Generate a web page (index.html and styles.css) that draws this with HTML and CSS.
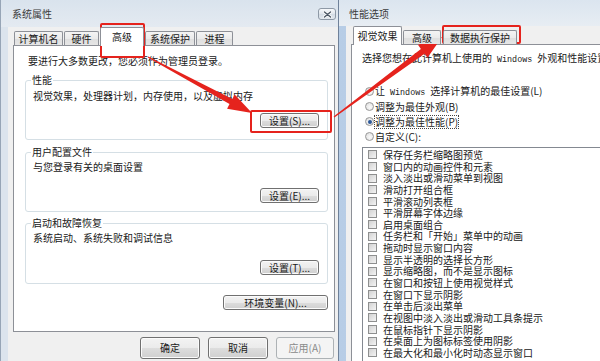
FILE: index.html
```html
<!DOCTYPE html>
<html lang="zh-CN">
<head>
<meta charset="utf-8">
<title>系统属性 / 性能选项</title>
<link rel="stylesheet" href="styles.css">
</head>
<body>
<div class="desk">
  <section class="win win-left">
    <header class="titlebar">
      <span class="title">系统属性</span>
      <span class="close"><svg width="9" height="7" viewBox="0 0 9 7"><path d="M1.5 1 L7.5 6 M7.5 1 L1.5 6" stroke="#fff" stroke-width="3" stroke-linecap="round"/><path d="M1.5 1 L7.5 6 M7.5 1 L1.5 6" stroke="#4d5866" stroke-width="1.5" stroke-linecap="round"/></svg></span>
    </header>
    <div class="client client-left">
      <div class="tabs">
        <span class="tab tw-49">计算机名</span>
        <span class="tab tw-35">硬件</span>
        <span class="tab tab-on tw-44">高级</span>
        <span class="tab tw-50">系统保护</span>
        <span class="tab tw-37">进程</span>
      </div>
      <div class="panel panel-left">
        <p class="intro">要进行大多数更改，您必须作为管理员登录。</p>
        <fieldset class="group g1">
          <legend>性能</legend>
          <p class="gtext">视觉效果，处理器计划，内存使用，以及虚拟内存</p>
          <div class="btn-row"><button class="btn btn-set">设置(S)...</button></div>
        </fieldset>
        <fieldset class="group g2">
          <legend>用户配置文件</legend>
          <p class="gtext">与您登录有关的桌面设置</p>
          <div class="btn-row"><button class="btn btn-set">设置(E)...</button></div>
        </fieldset>
        <fieldset class="group g3">
          <legend>启动和故障恢复</legend>
          <p class="gtext">系统启动、系统失败和调试信息</p>
          <div class="btn-row"><button class="btn btn-set">设置(T)...</button></div>
        </fieldset>
        <div class="btn-row env-row"><button class="btn btn-env">环境变量(N)...</button></div>
      </div>
      <div class="footer">
        <button class="btn btn-dlg">确定</button>
        <button class="btn btn-dlg">取消</button>
        <button class="btn btn-dlg btn-apply" disabled>应用(A)</button>
      </div>
    </div>
  </section>

  <section class="win win-right">
    <header class="titlebar titlebar-right">
      <span class="title">性能选项</span>
    </header>
    <div class="client client-right">
      <div class="tabs tabs-right">
        <span class="tab tab-on tw-49">视觉效果</span>
        <span class="tab tw-38">高级</span>
        <span class="tab tw-74">数据执行保护</span>
      </div>
      <div class="panel panel-right">
        <p class="lead">选择您想在此计算机上使用的<span class="latin"> Windows </span>外观和性能设置。</p>
        <ul class="radios">
          <li><span class="radio"></span><span>让<span class="latin"> Windows </span>选择计算机的最佳设置(L)</span></li>
          <li><span class="radio"></span><span>调整为最佳外观(B)</span></li>
          <li><span class="radio radio-on"></span><span class="focus">调整为最佳性能(P)</span></li>
          <li><span class="radio"></span><span>自定义(C):</span></li>
        </ul>
        <ul class="listbox">
          <li><span class="check"></span>保存任务栏缩略图预览</li>
          <li><span class="check"></span>窗口内的动画控件和元素</li>
          <li><span class="check"></span>淡入淡出或滑动菜单到视图</li>
          <li><span class="check"></span>滑动打开组合框</li>
          <li><span class="check"></span>平滑滚动列表框</li>
          <li><span class="check"></span>平滑屏幕字体边缘</li>
          <li><span class="check"></span>启用桌面组合</li>
          <li><span class="check"></span>任务栏和「开始」菜单中的动画</li>
          <li><span class="check"></span>拖动时显示窗口内容</li>
          <li><span class="check"></span>显示半透明的选择长方形</li>
          <li><span class="check"></span>显示缩略图，而不是显示图标</li>
          <li><span class="check"></span>在窗口和按钮上使用视觉样式</li>
          <li><span class="check"></span>在窗口下显示阴影</li>
          <li><span class="check"></span>在单击后淡出菜单</li>
          <li><span class="check"></span>在视图中淡入淡出或滑动工具条提示</li>
          <li><span class="check"></span>在鼠标指针下显示阴影</li>
          <li><span class="check"></span>在桌面上为图标标签使用阴影</li>
          <li><span class="check"></span>在最大化和最小化时动态显示窗口</li>
        </ul>
      </div>
    </div>
  </section>

  <svg class="marks" width="600" height="361" viewBox="0 0 600 361">
    <g fill="none" stroke="#e5231d" stroke-width="2">
      <rect x="101" y="24" width="43" height="33" rx="1"/>
      <rect x="251" y="111" width="80" height="21" rx="1"/>
      <rect x="443" y="26" width="77" height="17" rx="1"/>
    </g>
    <g fill="#e5231d">
      <polygon points="147.72,57.53 229.50,104.10 227.08,108.66 252,113 234.66,94.58 232.36,99.00 148.28,56.47"/>
      <polygon points="334.36,117.48 424.50,53.70 427.47,57.72 442,37 417.95,44.86 420.90,48.90 333.64,116.52"/>
    </g>
  </svg>
</div>
</body>
</html>
```

FILE: styles.css
```css
* { box-sizing: border-box; }

html, body {
  margin: 0;
  padding: 0;
}

body {
  width: 600px;
  height: 361px;
  overflow: hidden;
  font-family: "Noto Sans CJK SC", "Noto Sans", sans-serif;
  font-size: 10px;
  line-height: 12px;
  color: #202020;
  background: #dfe7ef;
}

p, ul { margin: 0; padding: 0; }
ul { list-style: none; }

.desk {
  position: relative;
  width: 600px;
  height: 361px;
  display: flex;
  overflow: hidden;
}

/* ---------- windows ---------- */
.win {
  display: flex;
  flex-direction: column;
  height: 361px;
  flex: 0 0 auto;
}

.win-left {
  width: 338px;
  border-left: 1px solid #97a5b6;
  background: #dce4ed;
}

.win-right {
  width: 300px;
  border-left: 1px solid #6f8199;
  background: linear-gradient(to right, #b7cde6, #c9daee);
}

.titlebar {
  height: 27px;
  flex: 0 0 auto;
  display: flex;
  justify-content: space-between;
  align-items: flex-start;
  padding-left: 11px;
  background: linear-gradient(#d9e3ed, #e4eaf1);
}

.titlebar-right {
  height: 26px;
  padding-left: 10px;
  background: linear-gradient(#dbe5ef, #e7edf3);
}

.title {
  margin-top: 8px;
  color: #3b3b3b;
}

.close {
  width: 18px;
  height: 12px;
  margin: 8px 2px 0 0;
  border: 1px solid #8e99a6;
  border-radius: 3px;
  background: linear-gradient(#f7f9fb, #dfe5ec 50%, #d3dbe4 51%, #e3e9ef);
  display: flex;
  align-items: center;
  justify-content: center;
}

.close svg { display: block; }

.client {
  flex: 1 1 auto;
  display: flex;
  flex-direction: column;
  background: #f0f0f0;
}

.client-left {
  margin-left: 7px;
  padding: 0 3px 0 5px;
}

.client-right {
  margin-left: 7px;
  padding: 0 0 0 5px;
}

/* ---------- tabs ---------- */
.tabs {
  height: 18px;
  flex: 0 0 auto;
  display: flex;
  align-items: flex-end;
  gap: 1px;
  padding-left: 1px;
  position: relative;
  z-index: 1;
}

.tabs-right { padding-left: 2px; }

.tab {
  height: 14px;
  padding-top: 1px;
  text-align: center;
  white-space: nowrap;
  border: 1px solid #8d9097;
  border-bottom: none;
  border-radius: 2px 2px 0 0;
  background: linear-gradient(#f4f4f4, #ebebeb 50%, #dedede 51%, #e6e6e6);
}

.tab-on {
  height: 19px;
  padding-top: 3px;
  margin-bottom: -1px;
  background: #fff;
}

.tw-35 { width: 35px; }
.tw-37 { width: 37px; }
.tw-38 { width: 38px; }
.tw-44 { width: 44px; }
.tw-49 { width: 49px; }
.tw-50 { width: 50px; }
.tw-74 { width: 74px; margin-left: 1px; }

/* ---------- panels ---------- */
.panel {
  background: #fff;
  border: 1px solid #8d9097;
}

.panel-left {
  height: 287px;
  flex: 0 0 auto;
  padding: 9px 6px 0 11px;
}

.intro { margin-left: 3px; }

.group {
  margin: 0;
  padding: 0 8px 8px 7px;
  border: 1px solid #d5dfe5;
  border-radius: 3px;
  min-width: 0;
}

.group legend {
  padding: 0 1px;
  margin-left: -2px;
  line-height: 12px;
}

.g1 { margin-top: 7px; padding-bottom: 11px; }
.g2 { margin-top: 6px; }
.g3 { margin-top: 5px; }

.g1 .gtext { margin-top: 4px; }
.g2 .gtext, .g3 .gtext { margin-top: 3px; }

.g1 .btn-row { margin-top: 11px; }
.g2 .btn-row { margin-top: 15px; }
.g3 .btn-row { margin-top: 16px; }

.btn-row {
  display: flex;
  justify-content: flex-end;
}

.env-row { margin-top: 11px; }

/* ---------- buttons ---------- */
.btn {
  font: inherit;
  color: #202020;
  height: 15px;
  padding: 0;
  border: 1px solid #707070;
  border-radius: 3px;
  background: linear-gradient(#f3f3f3, #ebebeb 50%, #dddddd 51%, #cfcfcf);
  box-shadow: inset 0 0 0 1px #fbfbfb;
  line-height: 12px;
  white-space: nowrap;
}

.btn-set { width: 59px; }
.btn-env { width: 105px; }

.footer {
  flex: 1 1 auto;
  display: flex;
  justify-content: flex-end;
  align-items: flex-start;
  gap: 8px;
  padding: 5px 1px 0 0;
}

.btn-dlg {
  width: 60px;
  height: 22px;
}

.btn-apply {
  width: 58px;
  color: #8a8a8a;
  border-color: #adb2b5;
  background: #f4f4f4;
  box-shadow: none;
}

/* ---------- right panel ---------- */
.panel-right {
  flex: 1 1 auto;
  padding: 7px 0 0 10px;
  white-space: nowrap;
}

.latin {
  font-family: "Liberation Mono", monospace;
  font-size: 8.4px;
  white-space: pre;
}

.radios {
  margin-top: 18px;
  margin-left: 3px;
}

.radios li {
  height: 15px;
  display: flex;
  align-items: center;
}

.radio {
  width: 9px;
  height: 9px;
  margin-right: 1px;
  border-radius: 50%;
  border: 1px solid #979797;
  background: radial-gradient(circle at 60% 60%, #fafafa, #dcdcdc);
  display: flex;
  align-items: center;
  justify-content: center;
}

.radio-on::after {
  content: "";
  width: 4px;
  height: 4px;
  border-radius: 50%;
  background: #2c5899;
}

.focus {
  outline: 1px dotted #444;
  outline-offset: 0;
}

.listbox {
  margin-top: 3px;
  height: 240px;
  border: 1px solid #848991;
  padding: 1px 0 0 5px;
  background: #fff;
}

.listbox li {
  height: 11.65px;
  line-height: 11.65px;
  display: flex;
  align-items: center;
}

.check {
  width: 9px;
  height: 9px;
  margin-right: 6px;
  border: 1px solid #8e8f8f;
  background: linear-gradient(135deg, #d2d2d2, #f4f4f4);
  flex: 0 0 auto;
}

/* ---------- annotations ---------- */
.marks {
  position: absolute;
  left: 0;
  top: 0;
  pointer-events: none;
}
```
